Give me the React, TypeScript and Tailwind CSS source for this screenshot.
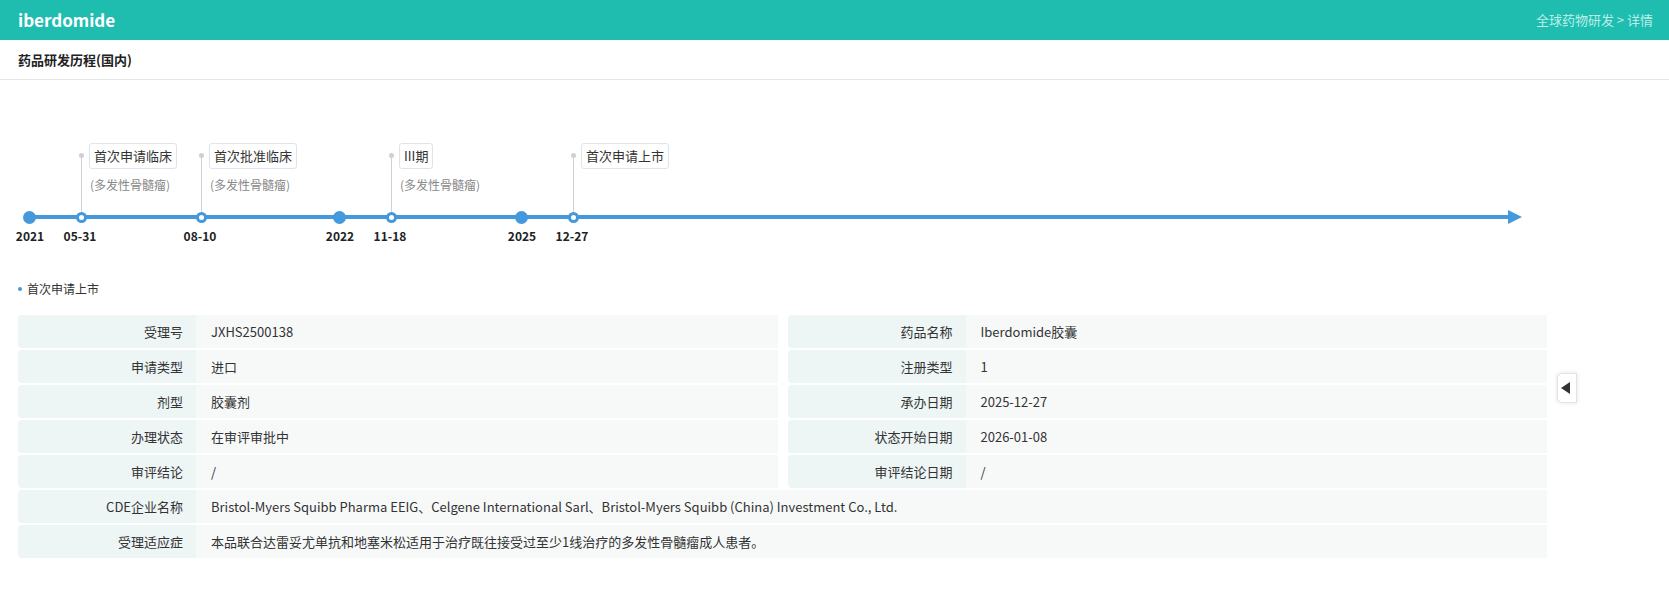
import React from "react";

const FONT = { fontFamily: '"Noto Sans CJK SC", "Noto Sans", sans-serif' };

type Ev = { x: number; date: string; title: string; sub?: string };
const years = [
  { x: 29, label: "2021" },
  { x: 339, label: "2022" },
  { x: 521, label: "2025" },
];
const events: Ev[] = [
  { x: 81, date: "05-31", title: "首次申请临床", sub: "(多发性骨髓瘤)" },
  { x: 201, date: "08-10", title: "首次批准临床", sub: "(多发性骨髓瘤)" },
  { x: 391, date: "11-18", title: "III期", sub: "(多发性骨髓瘤)" },
  { x: 573, date: "12-27", title: "首次申请上市" },
];

function Label({ children }: { children: React.ReactNode }) {
  return (
    <div className="w-[178px] shrink-0 bg-[#edf5f5] rounded-l-[4px] flex items-center justify-end pr-[13px] text-[13px] text-[#333]">
      {children}
    </div>
  );
}
function Value({ children }: { children: React.ReactNode }) {
  return (
    <div className="flex-1 bg-[#f7f9f9] flex items-center pl-[15px] text-[13px] text-[#333]">
      {children}
    </div>
  );
}
function Half({ l, v }: { l: string; v: string }) {
  return (
    <div className="flex h-[33px]">
      <Label>{l}</Label>
      <Value>{v}</Value>
    </div>
  );
}

const pairs: [string, string, string, string][] = [
  ["受理号", "JXHS2500138", "药品名称", "Iberdomide胶囊"],
  ["申请类型", "进口", "注册类型", "1"],
  ["剂型", "胶囊剂", "承办日期", "2025-12-27"],
  ["办理状态", "在审评审批中", "状态开始日期", "2026-01-08"],
  ["审评结论", "/", "审评结论日期", "/"],
];

export default function App() {
  return (
    <div className="w-[1669px] h-[604px] bg-white relative overflow-hidden" style={FONT}>
      <div className="h-[40px] bg-[#1fbdb0] flex items-center justify-between pl-[18px] pr-[16px]">
        <div className="text-white font-bold text-[17px]">iberdomide</div>
        <div className="text-[#bdeee8] text-[13px]">全球药物研发 &gt; 详情</div>
      </div>
      <div className="h-[40px] border-b border-[#e6e6e6] flex items-center pl-[18px]">
        <div className="font-bold text-[13px] text-[#222]">药品研发历程(国内)</div>
      </div>

      <div className="relative h-[190px]">
        <div className="absolute left-[28px] w-[1484px] top-[135px] h-[4px] bg-[#4499dd]" />
        <svg className="absolute left-[1508px] top-[129px]" width="16" height="16" viewBox="0 0 16 16">
          <polygon points="0,1 14,8 0,15" fill="#4499dd" />
        </svg>
        {years.map((y) => (
          <React.Fragment key={y.label}>
            <div
              className="absolute w-[13px] h-[13px] rounded-full bg-[#4499dd]"
              style={{ left: y.x - 6, top: 131 }}
            />
            <div
              className="absolute top-[147px] text-[12px] font-bold text-[#222] w-[40px] text-center"
              style={{ left: y.x - 19 }}
            >
              {y.label}
            </div>
          </React.Fragment>
        ))}
        {events.map((e) => (
          <React.Fragment key={e.date}>
            <div className="absolute w-px bg-[#d0d0d5]" style={{ left: e.x, top: 75, height: 58 }} />
            <div
              className="absolute w-[5px] h-[5px] rounded-full bg-[#cfcfd4]"
              style={{ left: e.x - 2, top: 73 }}
            />
            <div
              className="absolute w-[11px] h-[11px] rounded-full bg-white border-[3px] border-[#4499dd]"
              style={{ left: e.x - 5, top: 132 }}
            />
            <div
              className="absolute top-[147px] text-[12px] font-bold text-[#222] w-[50px] text-center"
              style={{ left: e.x - 26 }}
            >
              {e.date}
            </div>
            <div
              className="absolute h-[26px] px-[4px] border border-[#dfe4ea] rounded-[3px] bg-white flex items-center text-[13px] text-[#333] whitespace-nowrap"
              style={{ left: e.x + 8, top: 63 }}
            >
              {e.title}
            </div>
            {e.sub && (
              <div
                className="absolute text-[12px] text-[#888] whitespace-nowrap"
                style={{ left: e.x + 9, top: 96 }}
              >
                {e.sub}
              </div>
            )}
          </React.Fragment>
        ))}
      </div>

      <div className="pl-[18px] pt-[10px] flex items-center gap-[5px] text-[12px] text-[#333]">
        <span className="w-[4px] h-[4px] rounded-full bg-[#4499dd]" />
        <span>首次申请上市</span>
      </div>

      <div className="ml-[18px] mt-[17px] w-[1529px] flex flex-col gap-[2px]">
        {pairs.map((p) => (
          <div key={p[0]} className="grid grid-cols-2 gap-[10px]">
            <Half l={p[0]} v={p[1]} />
            <Half l={p[2]} v={p[3]} />
          </div>
        ))}
        <Half
          l="CDE企业名称"
          v="Bristol-Myers Squibb Pharma EEIG、Celgene International Sarl、Bristol-Myers Squibb (China) Investment Co., Ltd."
        />
        <Half l="受理适应症" v="本品联合达雷妥尤单抗和地塞米松适用于治疗既往接受过至少1线治疗的多发性骨髓瘤成人患者。" />
      </div>

      <div className="absolute left-[1557px] top-[373px] w-[20px] h-[30px] bg-white border border-[#e3e3e3] rounded-l-[5px] shadow-[0_0_4px_rgba(0,0,0,0.12)] flex items-center pl-[3px]">
        <svg width="9" height="12" viewBox="0 0 9 12">
          <polygon points="0,6 9,0 9,12" fill="#333" />
        </svg>
      </div>
    </div>
  );
}
